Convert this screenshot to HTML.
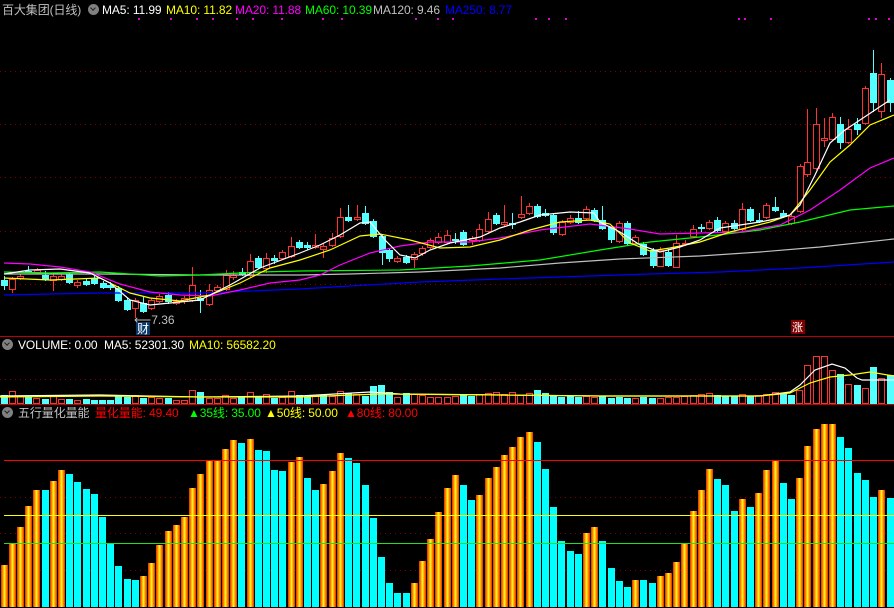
<!DOCTYPE html>
<html><head><meta charset="utf-8">
<style>
html,body{margin:0;padding:0;background:#000;}
body{width:894px;height:608px;overflow:hidden;position:relative;font-family:"Liberation Sans","Noto Sans CJK SC",sans-serif;}
svg{position:absolute;left:0;top:0;}
.t{position:absolute;font-size:12px;line-height:14px;white-space:pre;letter-spacing:-0.1px;}
.ic{position:absolute;width:11px;height:11px;border-radius:50%;background:#808080;}
.ic:after{content:"";position:absolute;left:3px;top:2px;width:3px;height:3px;border-right:1.5px solid #222;border-bottom:1.5px solid #222;transform:rotate(45deg);}
</style></head><body>
<svg id="s" width="894" height="608" xmlns="http://www.w3.org/2000/svg">
<defs>
<linearGradient id="g" x1="0" x2="1" y1="0" y2="0">
<stop offset="0" stop-color="#e03000"/><stop offset="0.25" stop-color="#ff8c00"/><stop offset="0.5" stop-color="#ffff20"/><stop offset="0.75" stop-color="#ff8c00"/><stop offset="1" stop-color="#e03000"/>
</linearGradient>
</defs>
<g id="grid" stroke="#800000" stroke-width="1" stroke-dasharray="1,4">
<line x1="0" x2="894" y1="71.5" y2="71.5"/><line x1="0" x2="894" y1="124.5" y2="124.5"/><line x1="0" x2="894" y1="177.5" y2="177.5"/><line x1="0" x2="894" y1="231.5" y2="231.5"/><line x1="0" x2="894" y1="284.5" y2="284.5"/>
<line x1="0" x2="894" y1="379.5" y2="379.5"/>
<line x1="0" x2="894" y1="497.5" y2="497.5"/><line x1="0" x2="894" y1="533.5" y2="533.5"/><line x1="0" x2="894" y1="570.5" y2="570.5"/>
</g>
<line x1="0" x2="894" y1="336.5" y2="336.5" stroke="#c00000"/>
<line x1="0" x2="894" y1="404.5" y2="404.5" stroke="#c00000"/>
<g id="main"></g>
<g id="vol"></g>
<g id="ind"></g>
<line x1="4" x2="894" y1="460.5" y2="460.5" stroke="#ff0000"/>
<line x1="4" x2="894" y1="515.5" y2="515.5" stroke="#ffff00"/>
<line x1="4" x2="894" y1="543.5" y2="543.5" stroke="#20e020"/>
<g fill="#e000e0" id="dots"></g>
<rect x="136" y="322" width="14" height="13" fill="#0a3a6a"/>
<text x="137" y="333" font-size="12" fill="#fff" font-family="Noto Sans CJK SC,sans-serif">财</text>
<text x="134" y="324" font-size="12" fill="#c0c0c0" font-family="Liberation Sans,sans-serif">⟵7.36</text>
<rect x="791" y="320" width="14" height="14" fill="#800000"/>
<text x="792" y="331" font-size="11" fill="#fff" font-family="Noto Sans CJK SC,sans-serif">涨</text>
</svg>
<div class="t" style="left:2px;top:3px;color:#c0c0c0">百大集团(日线)</div>
<div class="ic" style="left:88px;top:4px"></div>
<div class="t" style="left:102px;top:3px;color:#fff">MA5: 11.99</div>
<div class="t" style="left:166px;top:3px;color:#ffff00">MA10: 11.82</div>
<div class="t" style="left:235px;top:3px;color:#ff00ff">MA20: 11.88</div>
<div class="t" style="left:305px;top:3px;color:#00ff00">MA60: 10.39</div>
<div class="t" style="left:373px;top:3px;color:#c0c0c0">MA120: 9.46</div>
<div class="t" style="left:445px;top:3px;color:#0000ff">MA250: 8.77</div>
<div class="ic" style="left:2px;top:339px"></div>
<div class="t" style="left:18px;top:338px;color:#fff">VOLUME: 0.00  MA5: 52301.30</div>
<div class="t" style="left:189px;top:338px;color:#ffff00">MA10: 56582.20</div>
<div class="ic" style="left:2px;top:407px"></div>
<div class="t" style="left:18px;top:406px;color:#c0c0c0">五行量化量能</div>
<div class="t" style="left:95px;top:406px;color:#ff0000">量化量能: 49.40</div>
<div class="t" style="left:188px;top:406px;color:#00ff00">▲35线: 35.00</div>
<div class="t" style="left:265px;top:406px;color:#ffff00">▲50线: 50.00</div>
<div class="t" style="left:345px;top:406px;color:#ff0000">▲80线: 80.00</div>
<script>
var NS="http://www.w3.org/2000/svg";
function el(p,n,a){var e=document.createElementNS(NS,n);for(var k in a)e.setAttribute(k,a[k]);p.appendChild(e);return e;}
var R="#ff3232",C="#54ffff";
var B=[[1,565,1],[9,543,1],[17,527,1],[25,506,1],[33,490,1],[42,490,0],[50,481,1],[58,470,1],[66,474,0],[74,482,0],[83,489,0],[91,494,0],[99,517,0],[107,543,0],[115,566,0],[124,579,0],[132,580,0],[140,576,1],[148,563,1],[156,545,1],[165,531,1],[173,525,1],[181,517,1],[189,488,1],[197,474,1],[206,461,1],[214,460,1],[222,449,1],[230,440,1],[238,443,0],[247,439,1],[255,450,0],[263,451,0],[271,470,0],[279,471,0],[288,462,1],[296,457,1],[304,478,0],[312,490,0],[320,484,1],[329,471,1],[337,453,1],[345,458,0],[353,463,0],[362,485,0],[370,518,0],[378,557,0],[386,583,0],[394,593,0],[403,593,0],[411,583,1],[419,561,1],[427,539,1],[435,512,1],[444,488,1],[452,475,1],[460,485,0],[468,500,0],[476,495,1],[485,478,1],[493,467,1],[501,455,1],[509,447,1],[517,437,1],[526,432,1],[534,442,0],[542,469,0],[550,507,0],[558,541,0],[567,551,0],[575,554,0],[583,533,1],[591,527,1],[599,541,0],[608,568,0],[616,581,0],[624,587,0],[632,580,1],[640,580,0],[649,583,0],[657,576,1],[665,573,1],[673,562,1],[681,543,1],[690,511,1],[698,490,1],[706,469,1],[714,479,0],[722,485,0],[731,511,0],[739,499,1],[747,507,0],[755,493,1],[763,470,1],[772,461,1],[780,483,0],[788,499,0],[796,478,1],[804,446,1],[813,429,1],[821,424,1],[829,424,1],[837,437,0],[845,448,0],[854,473,0],[862,480,0],[870,497,0],[878,490,1],[887,498,0]];
var ind=document.getElementById("ind");
B.forEach(function(b){el(ind,"rect",{x:b[0],y:b[1],width:7,height:607-b[1],fill:b[2]?"url(#g)":"#00ffff"});});
var V=[395,391,396,397,398,399,395,399,399,400,399,400,400,400,396,397,395,398,397,398,398,400,400,390,392,398,398,395,398,397,392,396,394,398,397,391,395,396,395,395,396,391,393,394,396,386,385,392,397,393,394,395,397,397,397,396,395,396,394,393,392,394,392,395,393,390,393,395,397,396,397,396,397,396,398,397,398,398,397,398,398,397,397,396,395,394,393,395,396,396,394,396,395,394,392,393,395,390,365,356,356,370,374,384,385,388,367,378,375,381];
var VT=[0,1,1,0,1,0,1,1,0,1,0,0,0,0,0,0,1,0,1,1,0,1,1,1,0,1,1,1,1,0,1,0,1,0,1,1,0,0,1,0,1,1,0,1,0,0,0,0,1,0,1,1,1,1,1,1,0,0,1,1,1,1,1,1,1,0,0,0,0,0,0,1,1,0,0,0,0,1,0,0,1,1,1,1,1,1,1,0,0,0,1,0,1,1,1,0,0,1,1,1,1,1,1,0,1,0,1,0,1,0];
var vol=document.getElementById("vol");
B.forEach(function(b,i){var t=V[i]||396;var red=i<VT.length?VT[i]:b[2];
 if(i>=100){red=[1,1,0,1,0,1,0,1,0][i-100];}
 if(red)el(vol,"rect",{x:b[0]+0.5,y:t+0.5,width:6,height:403-t,fill:"none",stroke:R});
 else el(vol,"rect",{x:b[0],y:t,width:7,height:404-t,fill:C});});
function pl(g,pts,c){el(g,"polyline",{points:pts,fill:"none",stroke:c,"stroke-width":1.2});}
pl(vol,"0,396 100,395 200,397 300,396 370,392 400,394 500,395 600,396 700,396 760,396 790,392 800,385 815,370 832,364 845,368 857,378 862,380 894,380","#fff");
pl(vol,"0,397 100,396 200,397 300,397 380,394 500,395 600,396 700,396 760,396 790,393 810,383 830,377 850,375 870,372 894,376","#ffff00");
var K=[[4,280,285,0,276,290],[12,279,289,1,277,293],[20,276,278,1,274,280],[28,271,272,0,266,273],[37,270,272,1,268,274],[45,275,279,0,271,281],[53,276,280,1,274,291],[61,276,279,1,274,281],[69,274,282,0,272,284],[77,282,285,1,280,288],[86,281,284,0,279,286],[94,278,283,0,276,285],[103,283,287,0,281,289],[110,285,287,0,282,290],[118,288,300,0,286,302],[127,300,309,0,298,311],[135,300,308,1,298,318],[143,303,311,0,296,313],[151,300,308,1,298,310],[159,296,301,1,294,303],[168,295,301,0,292,304],[176,301,303,1,299,305],[184,298,301,1,296,304],[192,285,300,1,267,302],[200,298,300,0,290,313],[209,290,304,1,284,306],[217,287,290,1,285,292],[226,275,289,1,270,291],[233,275,277,1,271,280],[242,272,274,0,268,276],[250,261,275,1,254,277],[258,258,267,0,256,269],[266,258,268,1,253,273],[274,258,260,0,255,264],[282,252,258,1,250,260],[291,246,256,1,237,258],[299,242,247,0,240,249],[307,245,247,0,242,250],[315,245,247,1,234,249],[323,246,249,1,243,258],[332,238,245,1,233,247],[340,217,236,1,208,238],[348,217,220,0,205,222],[357,217,219,1,205,221],[365,213,223,0,206,225],[373,221,236,0,219,238],[382,236,252,0,234,265],[389,250,258,0,248,262],[397,258,261,1,256,263],[406,257,262,0,255,264],[414,254,259,1,252,268],[422,248,253,1,246,256],[430,240,247,1,238,249],[438,237,242,1,233,244],[447,235,242,1,230,244],[455,239,240,0,233,244],[463,232,244,0,230,246],[472,238,240,1,236,245],[479,229,240,1,224,242],[488,219,231,1,212,233],[496,215,223,0,213,225],[504,222,224,1,205,226],[512,223,224,0,213,229],[521,214,217,1,196,219],[529,206,213,1,203,215],[537,206,216,0,204,218],[545,213,215,0,209,217],[553,215,232,0,213,235],[562,222,234,1,220,236],[570,218,222,1,215,224],[578,218,222,0,211,224],[586,209,218,1,206,220],[594,210,220,0,208,222],[602,220,228,0,206,230],[611,227,239,0,225,243],[619,223,241,1,221,243],[627,223,243,0,221,245],[635,237,243,1,235,245],[643,244,254,0,242,256],[653,250,265,0,248,268],[660,250,266,1,247,267],[668,252,265,0,249,267],[676,243,267,1,235,268],[685,243,244,1,240,246],[693,229,236,1,225,238],[701,227,228,0,224,232],[709,222,228,1,220,230],[717,220,230,0,217,232],[725,223,231,1,221,233],[734,223,228,0,220,230],[742,209,229,1,203,231],[750,209,220,0,207,222],[759,220,221,0,213,223],[766,205,217,1,203,219],[775,207,210,0,197,212],[783,213,216,0,210,218],[791,216,223,1,214,225],[800,166,211,1,164,213],[807,162,174,1,109,177],[816,124,168,1,108,170],[824,138,140,1,118,147],[832,117,139,1,113,141],[840,124,142,0,117,149],[848,129,142,1,119,144],[857,124,129,0,118,135],[865,88,123,1,86,125],[873,73,102,0,50,112],[881,74,111,1,63,118],[890,80,102,0,78,112]];
var m=document.getElementById("main");
K.forEach(function(k){var c=k[3]?R:C,x=k[0];
 el(m,"line",{x1:x+0.5,x2:x+0.5,y1:k[4],y2:k[5],stroke:c});
 var h=Math.max(1,k[2]-k[1]);
 if(k[3])el(m,"rect",{x:x-3+0.5,y:k[1]+0.5,width:6,height:h,fill:"#000",stroke:c});
 else el(m,"rect",{x:x-3,y:k[1],width:7,height:h+1,fill:c});});
pl(m,"4,295 50,294 100,293 200,293 300,289 350,286 420,282 500,279 560,277 650,274 720,272 800,268 894,262","#0000ff");
pl(m,"4,274 100,274 200,275 300,275 350,274 420,272 500,268 560,263 620,259 700,256 760,252 820,247 894,239","#c0c0c0");
pl(m,"4,272 50,273 100,272 160,276 200,275 260,272 300,271 400,270 470,266 540,260 600,250 650,242 700,237 760,230 800,222 850,210 894,206","#00ff00");
pl(m,"4,263 30,264 60,267 90,272 120,284 150,292 180,295 210,296 240,290 270,283 300,280 320,275 340,265 370,253 400,246 430,242 470,242 500,238 540,230 590,224 630,229 660,234 700,233 740,232 780,225 810,210 840,190 870,168 894,158","#ff00ff");
pl(m,"4,278 50,280 100,278 130,293 150,298 180,301 210,295 240,283 270,268 300,260 330,250 360,236 380,234 410,240 440,248 470,247 500,240 530,230 560,222 590,220 610,224 630,243 650,251 670,248 700,242 730,232 770,222 790,215 810,190 830,162 850,145 870,125 894,115","#ffff00");
pl(m,"4,274 30,270 60,269 90,273 110,283 130,300 150,305 170,303 200,300 230,285 260,268 300,253 320,245 340,235 360,223 370,222 385,240 400,255 415,258 430,250 450,243 480,237 500,228 520,222 540,215 570,212 594,213 600,222 620,232 640,245 660,252 680,247 700,240 720,228 740,225 760,222 780,218 790,215 800,205 815,175 830,143 845,130 860,120 875,110 890,100","#ffffff");
var d=document.getElementById("dots");
[138,170,196,212,236,252,281,322,341,415,437,452,535,548,565,738,744,770,868,875,888].forEach(function(x){el(d,"rect",{x:x,y:18,width:2,height:2});});
</script>
</body></html>
